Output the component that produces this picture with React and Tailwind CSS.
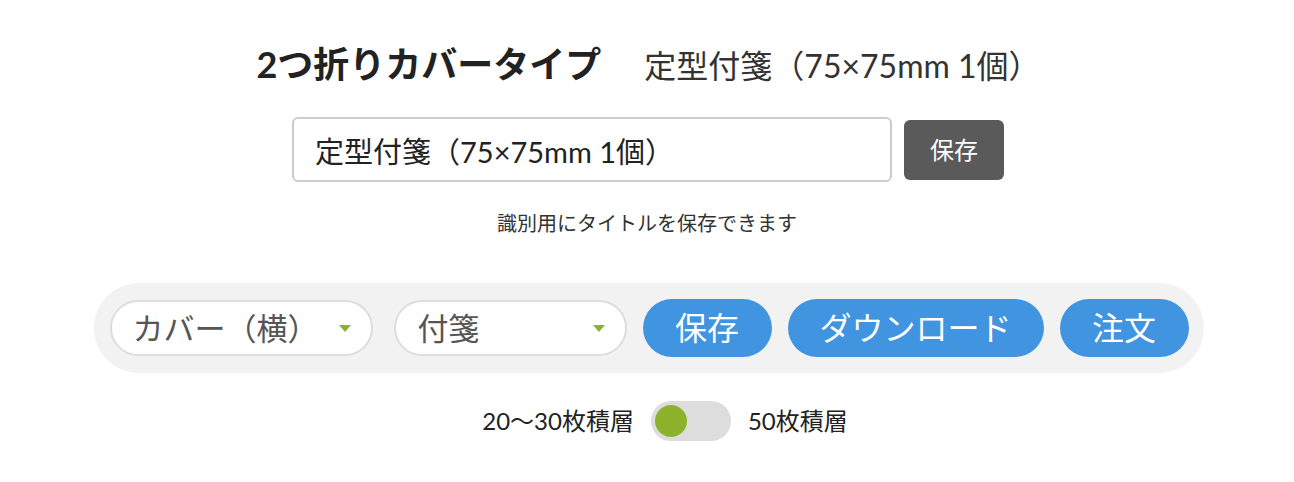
import { useState } from 'react';

const font = { fontFamily: 'Lato, "Noto Sans CJK JP", sans-serif' };

const Select = ({ label, width }) => (
  <div
    className={`flex items-center justify-between h-[56px] rounded-full border-2 border-[#dddddd] bg-white pl-[21px] pr-[20px] ${width}`}
  >
    <span className="text-[31px] text-[#555555] leading-none">{label}</span>
    <span className="w-0 h-0 border-l-[6px] border-r-[6px] border-t-[7px] border-l-transparent border-r-transparent border-t-[#8ab12b]" />
  </div>
);

const PillButton = ({ children, width }) => (
  <button className={`h-[58px] rounded-full bg-[#4094e0] text-white text-[32px] leading-none ${width}`}>
    {children}
  </button>
);

const App = () => {
  const [title, setTitle] = useState('定型付箋（75×75mm 1個）');
  const [stack50, setStack50] = useState(false);

  return (
    <div className="w-[1294px] h-[482px] bg-white text-[#222222] flex flex-col items-center" style={font}>
      <div className="flex items-baseline mt-[40px] h-[48px] ml-[3px]">
        <h1 className="text-[36px] leading-[48px] font-bold text-[#222222]">2つ折りカバータイプ</h1>
        <span className="text-[32px] leading-[48px] text-[#333333] ml-[43px]">定型付箋（75×75mm 1個）</span>
      </div>

      <div className="flex items-center mt-[29px] ml-[2px]">
        <input
          value={title}
          onChange={(e) => setTitle(e.target.value)}
          className="w-[600px] h-[65px] rounded-[6px] border-2 border-[#cccccc] px-[21px] text-[29px] text-[#222222] outline-none"
          style={font}
        />
        <button className="ml-[12px] w-[100px] h-[60px] rounded-[6px] bg-[#5a5a5a] text-white text-[24px]">保存</button>
      </div>

      <p className="mt-[31px] text-[20px] text-[#333333] leading-none">識別用にタイトルを保存できます</p>

      <div className="mt-[50px] ml-[3px] w-[1110px] h-[90px] rounded-full bg-[#f2f2f2] flex items-center pl-[16px] pr-[15px]">
        <Select label="カバー（横）" width="w-[265px]" />
        <div className="w-[21px]" />
        <Select label="付箋" width="w-[233px]" />
        <div className="flex gap-[16px] ml-[16px]">
          <PillButton width="w-[129px]">保存</PillButton>
          <PillButton width="w-[256px]">ダウンロード</PillButton>
          <PillButton width="w-[129px]">注文</PillButton>
        </div>
      </div>

      <div className="flex items-center mt-[28px] ml-[36px] text-[24px] text-[#222222]">
        <span>20〜30枚積層</span>
        <button
          onClick={() => setStack50(!stack50)}
          className={`mx-[17px] w-[80px] h-[40px] rounded-full bg-[#dddddd] flex items-center px-[4px] ${stack50 ? 'justify-end' : 'justify-start'}`}
        >
          <span className="w-[32px] h-[32px] rounded-full bg-[#8db32c]" />
        </button>
        <span>50枚積層</span>
      </div>
    </div>
  );
};

export default App;
